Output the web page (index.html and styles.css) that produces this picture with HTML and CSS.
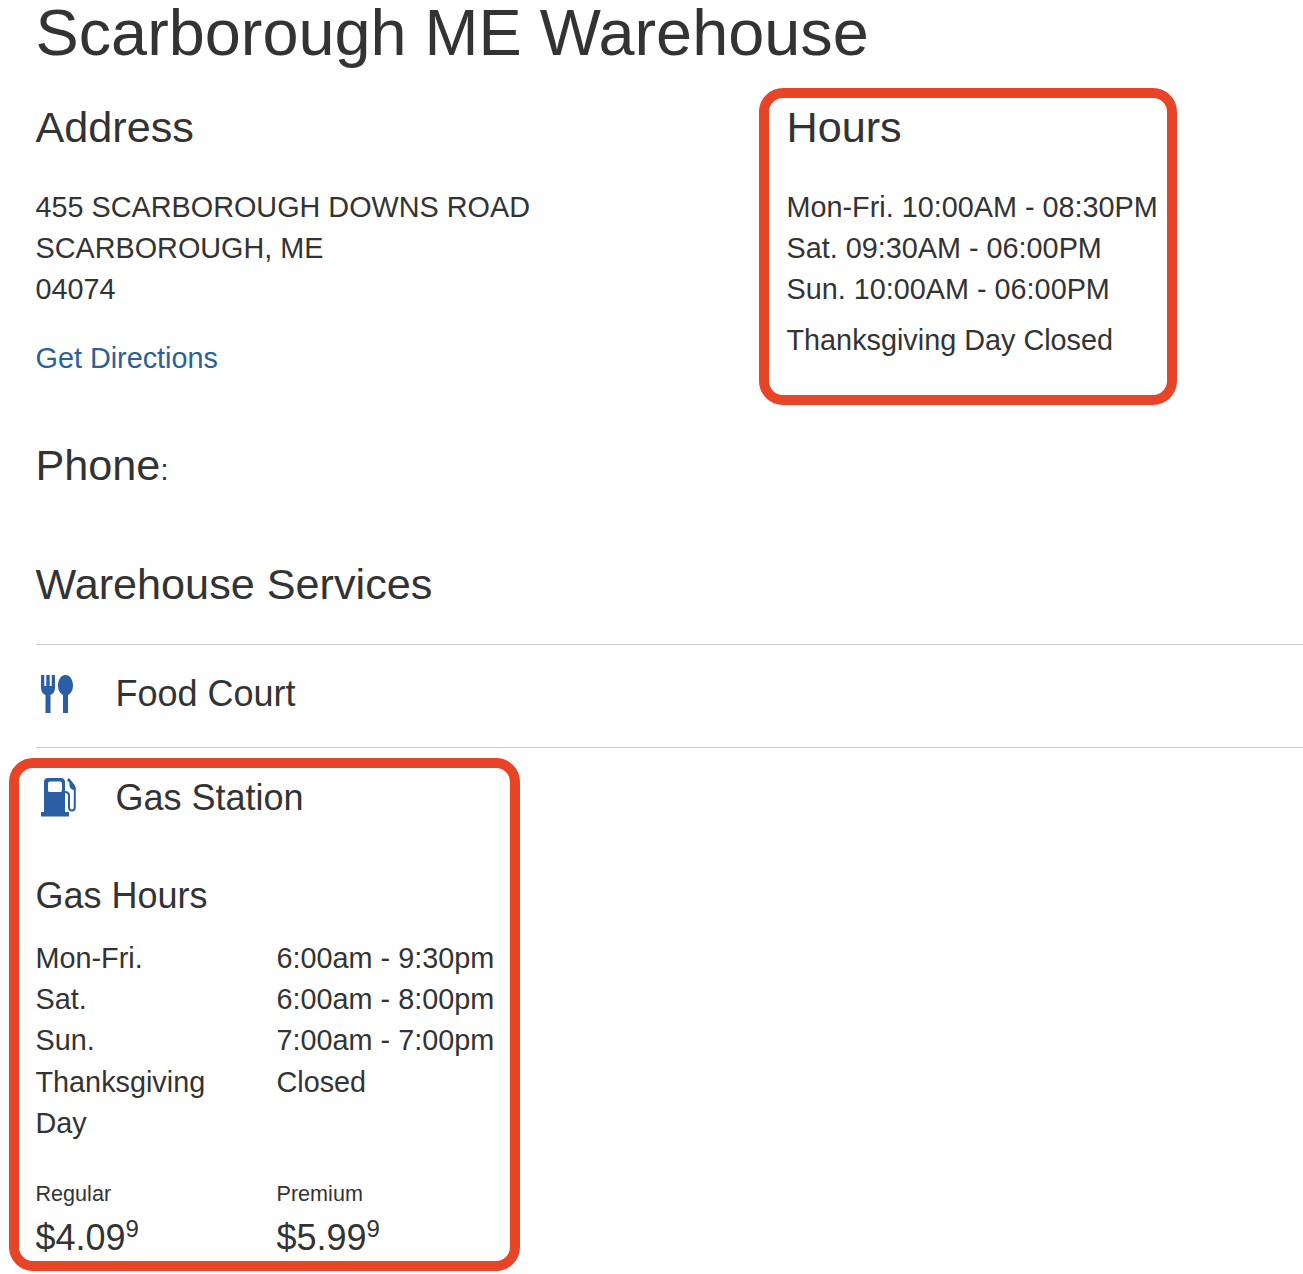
FILE: index.html
```html
<!DOCTYPE html>
<html lang="en">
<head>
<meta charset="utf-8">
<title>Scarborough ME Warehouse</title>
<link rel="stylesheet" href="styles.css">
</head>
<body>
<main class="page">
  <h1 class="title">Scarborough ME Warehouse</h1>
  <section class="info">
    <div class="address">
      <h2 class="heading">Address</h2>
      <p class="lines">455 SCARBOROUGH DOWNS ROAD<br>SCARBOROUGH, ME<br>04074</p>
      <a class="link" href="#">Get Directions</a>
    </div>
    <div class="hours">
      <h2 class="heading">Hours</h2>
      <p class="lines">Mon-Fri. 10:00AM - 08:30PM<br>Sat. 09:30AM - 06:00PM<br>Sun. 10:00AM - 06:00PM</p>
      <p class="holiday">Thanksgiving Day Closed</p>
      <div class="callout callout-hours"></div>
    </div>
  </section>
  <h2 class="heading phone">Phone<span class="colon">:</span></h2>
  <h2 class="heading services-title">Warehouse Services</h2>
  <ul class="services">
    <li class="service">
      <svg class="icon" viewBox="0 0 40 40" aria-hidden="true"><path d="M5 1h3.300v11h2V1h3.400v11h2V1H19v13c0 3.500-2 6-4.500 7v18h-5V21C7 20 5 17.500 5 14z"/><path d="M29.500 1C34 1 37 6 37 11.500c0 5-2.500 8.500-5 9.500v18h-5V21c-2.500-1-5-4.500-5-9.500C22 6 25 1 29.500 1z"/></svg>
      <span class="service-name">Food Court</span>
    </li>
    <li class="service gas">
      <div class="gas-head">
        <svg class="icon gas-icon" viewBox="0 0 40 40" aria-hidden="true"><path fill-rule="evenodd" d="M8 5c0-2.500 1.500-4 4-4h13c2.500 0 4 1.500 4 4v30h4v4.500H5V35h3zM12 7v6c0 1.500.5 2 2 2h10c1.500 0 2-.5 2-2V7c0-1.500-.5-2.500-2-2.500H14c-1.500 0-2 1-2 2.500z"/><path d="M31 3l2-2 6 7.500V13c-3 0-5.500-2-5.500-4V6z"/><path class="hose" d="M29 15c2.500 0 4 1 4 3.500V30c0 2.200 1.300 3.500 3 3.500s2.800-1.300 2.800-3.500V10"/></svg>
        <span class="service-name">Gas Station</span>
      </div>
      <h3 class="gas-title">Gas Hours</h3>
      <dl class="gas-table">
        <dt>Mon-Fri.</dt><dd>6:00am - 9:30pm</dd>
        <dt>Sat.</dt><dd>6:00am - 8:00pm</dd>
        <dt>Sun.</dt><dd>7:00am - 7:00pm</dd>
        <dt>Thanksgiving Day</dt><dd>Closed</dd>
      </dl>
      <div class="prices">
        <div class="price"><span class="grade">Regular</span><span class="amount">$4.09<sup class="tenth">9</sup></span></div>
        <div class="price"><span class="grade">Premium</span><span class="amount">$5.99<sup class="tenth">9</sup></span></div>
      </div>
      <div class="callout callout-gas"></div>
    </li>
  </ul>
</main>
</body>
</html>
```
FILE: styles.css
```css
* { box-sizing: border-box; }
html, body { margin: 0; padding: 0; background: #fff; }
body {
  font-family: "Liberation Sans", Arial, sans-serif;
  color: #333;
  font-size: 28.8px;
  line-height: 41.2px;
}
.page { padding-left: 35.5px; height: 1274px; overflow: hidden; }
.title { margin: 0; font-size: 64.8px; font-weight: 400; line-height: 66px; }
.heading { margin: 0; font-size: 43.2px; font-weight: 400; line-height: 50px; }
.info { display: flex; margin-top: 36px; height: 338px; }
.address { width: 751px; }
.hours { position: relative; width: 400px; }
.lines { margin: 35px 0 0; }
.holiday { margin: 9px 0 0; }
.link { display: block; margin-top: 27px; color: #2a6196; text-decoration: none; }
.colon { font-size: 28.8px; }
.services-title { margin-top: 64px; }
.services { list-style: none; margin: 35px 0 0; padding: 0; }
.service { border-top: 1px solid #ccc; display: flex; align-items: flex-start; height: 103px; padding-top: 28px; }
.service-name { font-size: 36px; line-height: 41px; margin-left: 40px; }
.icon { width: 40px; height: 40px; fill: #2a5fa5; flex: none; margin-top: 1px; }
.gas-icon { margin-top: 0; }
.hose { fill: none; stroke: #2a5fa5; stroke-width: 2; }
.gas { position: relative; display: block; height: auto; padding-top: 29px; }
.gas-head { display: flex; align-items: flex-start; }
.gas-title { margin: 57px 0 0; font-size: 36px; font-weight: 400; line-height: 41px; }
.gas-table { display: grid; grid-template-columns: 241px 240px; margin: 22px 0 0; width: 481px; }
.gas-table dt, .gas-table dd { margin: 0; }
.gas-table dt { width: 200px; }
.prices { display: grid; grid-template-columns: 241px 240px; margin-top: 35px; }
.price { display: flex; flex-direction: column; }
.grade { font-size: 21.6px; line-height: 30px; }
.amount { font-size: 36px; line-height: 44px; margin-top: 7px; }
.tenth { font-size: 24px; line-height: 0; }
.callout { position: absolute; border: 10px solid #e84427; border-radius: 24px; pointer-events: none; }
.callout-hours { left: -27.5px; top: -14px; width: 418px; height: 317px; }
.callout-gas { left: -26.5px; top: 10px; width: 511px; height: 513px; }
```
